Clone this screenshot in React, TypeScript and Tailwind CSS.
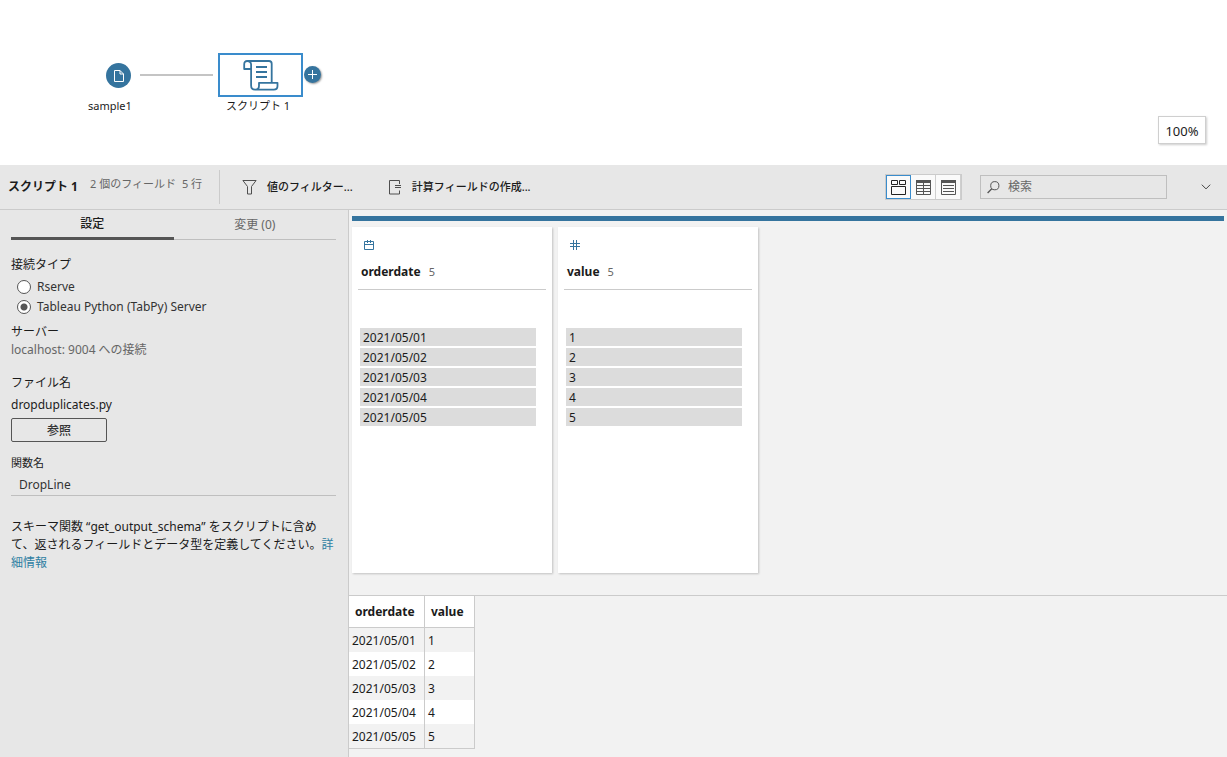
import { ReactNode } from "react";
import clsx from "clsx";

const dates = [
  "2021/05/01",
  "2021/05/02",
  "2021/05/03",
  "2021/05/04",
  "2021/05/05",
];

function FileIcon() {
  return (
    <svg width="12" height="14" viewBox="0 0 12 14" fill="none" stroke="white">
      <path d="M1.5 1.5h5.5l3.5 3.5v7.5h-9zM7 1.5v3.5h3.5" />
    </svg>
  );
}

function ScriptIcon() {
  return (
    <svg
      width="36"
      height="32"
      viewBox="0 0 36 32"
      fill="none"
      stroke="#35749e"
      strokeWidth="1.8"
      strokeLinejoin="round"
    >
      <path d="M4.5 2H26c1.600 0 2.700 1 2.700 2.700V23.500" />
      <path d="M4.200 2C2.300 2 1.200 3.400 1.200 5.200V10h6.900V5.500C8.100 3.400 6.600 2 4.200 2z" />
      <path d="M8.100 10v16.500c0 2.700 1.500 4.200 4 4.200h18.700c2.500 0 3.700-1.500 3.700-3.700v-3.200H16v3c0 2.400-1.300 3.900-3.600 3.900" />
      <path d="M13 8h11M13 13h11M13 18h11" />
    </svg>
  );
}

function FilterIcon() {
  return (
    <svg width="15" height="15" viewBox="0 0 15 15" fill="none" stroke="#4e4e4e">
      <path d="M.9.5h13.200L9.500 6.500v7.500h-4V6.500z" />
    </svg>
  );
}

function CalcIcon() {
  return (
    <svg width="13" height="15" viewBox="0 0 13 15" fill="none" stroke="#4e4e4e">
      <path d="M10.500 4V.500H.500v13.500h10V10.500M6 5.500h6M6 7.500h6" />
    </svg>
  );
}

function CalendarIcon() {
  return (
    <svg width="10" height="11" viewBox="0 0 10 11" fill="none" stroke="#35749e">
      <path d="M.500 1.500h9v8h-9zM.500 4.500h9M3.500 0v3M6.500 0v3" />
    </svg>
  );
}

function HashIcon() {
  return (
    <svg width="10" height="11" viewBox="0 0 10 11" fill="none" stroke="#35749e">
      <path d="M0 3.500h10M0 6.500h10M3.500 0v10M6.500 0v10" />
    </svg>
  );
}

function ProfileViewIcon() {
  return (
    <svg width="15" height="15" viewBox="0 0 15 15" fill="none" stroke="#222">
      <path d="M.500.500h6v4h-6zM8.500.500h6v4h-6zM.500 6.500h14v8H.500z" />
    </svg>
  );
}

function GridViewIcon() {
  return (
    <svg width="15" height="15" viewBox="0 0 15 15" fill="none" stroke="#555">
      <path d="M.500.500h14v14H.500zM.500 5.500h14M.500 8.500h14M.500 11.500h14M7.500 3v12" />
      <path d="M0 0h15v3H0z" fill="#555" stroke="none" />
    </svg>
  );
}

function ListViewIcon() {
  return (
    <svg width="15" height="15" viewBox="0 0 15 15" fill="none" stroke="#555">
      <path d="M.500.500h14v14H.500zM2 5.500h11M2 8.500h11M2 11.500h11" />
      <path d="M0 0h15v3H0z" fill="#555" stroke="none" />
    </svg>
  );
}

function SearchIcon() {
  return (
    <svg width="13" height="13" viewBox="0 0 13 13" fill="none" stroke="#555">
      <circle cx="7.800" cy="4.700" r="4.100" />
      <path d="M4.800 7.700L.600 12" strokeWidth="1.300" />
    </svg>
  );
}

function FlowPane() {
  return (
    <section className="relative h-[165px] bg-white leading-4">
      <span className="absolute left-[106px] top-[63px] flex size-[25px] items-center justify-center rounded-full bg-[#35749e]">
        <FileIcon />
      </span>
      <span className="absolute left-[88px] top-[98px] text-[11px]">
        sample1
      </span>
      <span className="absolute left-[140px] top-[74px] h-[2px] w-[73px] bg-[#c4c4c4]" />
      <button
        aria-label="スクリプト 1"
        className="absolute left-[218px] top-[53px] flex h-11 w-[85px] items-center justify-center border-2 border-[#3a8ccc] bg-white"
      >
        <ScriptIcon />
      </button>
      <span className="absolute left-[226px] top-[98px] text-[11px]">
        スクリプト 1
      </span>
      <button
        aria-label="追加"
        className="absolute left-[304px] top-[66px] flex size-[17px] items-center justify-center rounded-full bg-[#35749e] shadow-[1px_1px_2px_#0006]"
      >
        <svg width="9" height="9" viewBox="0 0 9 9" stroke="white">
          <path d="M4.500 0v9M0 4.500h9" />
        </svg>
      </button>
      <button className="absolute right-[21px] top-[116px] flex h-7 w-12 items-center justify-center border border-[#cfcfcf] bg-white pt-px text-[13px] shadow-[1px_1px_2px_#0003]">
        100%
      </button>
    </section>
  );
}

function ViewButton({
  label,
  active,
  children,
}: {
  label: string;
  active?: boolean;
  children: ReactNode;
}) {
  return (
    <button
      aria-label={label}
      className={clsx(
        "flex h-6 w-[25px] items-center justify-center bg-[#fafafa]",
        active ? "border border-[#3a8ccc]" : "border-r border-[#cfcfcf]"
      )}
    >
      {children}
    </button>
  );
}

function Toolbar() {
  return (
    <header className="flex h-[45px] items-center border-b border-[#cbcbcb] bg-[#e7e7e7] pl-2 pr-4">
      <h1 className="pb-px font-bold">スクリプト 1</h1>
      <p className="ml-3 flex gap-[6px] pb-[6px] text-[11px] text-[#666]">
        <span>2 個のフィールド</span>
        <span>5 行</span>
      </p>
      <span className="ml-[17px] h-[34px] w-px bg-[#cbcbcb]" />
      <button className="ml-[22px] flex items-center gap-[10px] text-[11px] font-medium">
        <FilterIcon />
        値のフィルター...
      </button>
      <button className="ml-9 flex items-center gap-[10px] text-[11px] font-medium">
        <CalcIcon />
        計算フィールドの作成...
      </button>
      <div className="ml-auto flex border border-[#cbcbcb]">
        <ViewButton label="プロファイル" active>
          <ProfileViewIcon />
        </ViewButton>
        <ViewButton label="グリッド">
          <GridViewIcon />
        </ViewButton>
        <ViewButton label="リスト">
          <ListViewIcon />
        </ViewButton>
      </div>
      <label className="ml-[18px] flex h-6 w-[187px] items-center gap-2 border border-[#bfbfbf] pl-[6px]">
        <SearchIcon />
        <input
          aria-label="検索"
          placeholder="検索"
          className="min-w-0 flex-1 bg-transparent outline-none placeholder:text-[#666]"
        />
      </label>
      <button aria-label="折りたたむ" className="ml-[34px]">
        <svg width="10" height="6" viewBox="0 0 10 6" fill="none" stroke="#444">
          <path d="M.800.700L5 4.900 9.200.700" />
        </svg>
      </button>
    </header>
  );
}

function ServerOption({ label, checked }: { label: string; checked?: boolean }) {
  return (
    <label className="flex h-5 items-center gap-[6px] pl-[6px] text-[#333]">
      <input
        type="radio"
        name="server"
        defaultChecked={checked}
        className="size-[14px] appearance-none rounded-full border border-[#555] bg-white checked:bg-[radial-gradient(circle,#555_3px,white_4px)]"
      />
      {label}
    </label>
  );
}

function SettingsPanel() {
  return (
    <aside className="w-[349px] shrink-0 border-r border-[#cbcbcb] bg-[#e7e7e7] pl-[11px] pr-3">
      <div role="tablist" className="flex h-[30px]">
        <button
          role="tab"
          aria-selected="true"
          className="flex-1 border-b-3 border-[#555] font-medium"
        >
          設定
        </button>
        <button
          role="tab"
          aria-selected="false"
          className="flex-1 border-b border-[#bfbfbf] text-[#666]"
        >
          変更 (0)
        </button>
      </div>
      <fieldset className="mt-4">
        <legend className="pb-[3px]">接続タイプ</legend>
        <ServerOption label="Rserve" />
        <ServerOption label="Tableau Python (TabPy) Server" checked />
      </fieldset>
      <h2 className="mt-[6px]">サーバー</h2>
      <p className="text-[#666]">localhost: 9004 への接続</p>
      <h2 className="mt-[15px]">ファイル名</h2>
      <p className="mt-1">dropduplicates.py</p>
      <button className="mt-1 flex h-6 w-24 items-center justify-center rounded-[2px] border border-[#555] pt-px font-medium text-[#333]">
        参照
      </button>
      <label htmlFor="fn" className="mt-3 block text-[11px]">
        関数名
      </label>
      <input
        id="fn"
        defaultValue="DropLine"
        className="block h-6 w-full border-b border-[#bfbfbf] bg-transparent px-2 pt-px text-[#333] outline-none"
      />
      <p className="mt-[22px]">
        スキーマ関数 “get_output_schema” をスクリプトに含めて、返されるフィールドとデータ型を定義してください。
        <a href="#" className="text-[#2f7fa3]">
          詳細情報
        </a>
      </p>
    </aside>
  );
}

function FieldCard({
  name,
  icon,
  values,
}: {
  name: string;
  icon: ReactNode;
  values: string[];
}) {
  return (
    <article className="w-[200px] bg-white px-[6px] pt-[13px] shadow-[1px_1px_2px_#0003]">
      <div className="h-[50px] border-b border-[#cbcbcb]">
        <div className="pl-[6px]">{icon}</div>
        <h3 className="mt-3 flex gap-2 pl-[3px] font-bold">
          {name}
          <span className="text-[11px] font-normal text-[#666]">
            {values.length}
          </span>
        </h3>
      </div>
      <ul className="ml-[2px] mr-[10px] mt-[38px] flex flex-col gap-[2px]">
        {values.map((value) => (
          <li key={value} className="h-[18px] bg-[#dcdcdc] pl-[3px] pt-px">
            {value}
          </li>
        ))}
      </ul>
    </article>
  );
}

function DataTable() {
  return (
    <table className="border-separate border-spacing-0">
      <thead>
        <tr className="h-8 bg-white text-left">
          <th className="w-[76px] border-b border-r border-[#cbcbcb] pl-[6px]">
            orderdate
          </th>
          <th className="w-[50px] border-b border-r border-[#cbcbcb] pl-[6px]">
            value
          </th>
        </tr>
      </thead>
      <tbody>
        {dates.map((date, i) => (
          <tr key={date} className="group h-6 last:h-[25px] even:bg-white">
            <td className="border-r border-[#cbcbcb] pl-[3px] pt-px group-last:border-b">
              {date}
            </td>
            <td className="border-r border-[#cbcbcb] pl-[3px] pt-px group-last:border-b">
              {i + 1}
            </td>
          </tr>
        ))}
      </tbody>
    </table>
  );
}

function App() {
  return (
    <div
      lang="ja"
      className="flex min-h-screen flex-col bg-[#f2f2f2] font-['Noto_Sans','Noto_Sans_CJK_JP',sans-serif] text-[12px] leading-[18px] text-[#1b1b1b]"
    >
      <FlowPane />
      <Toolbar />
      <div className="flex flex-1">
        <SettingsPanel />
        <main className="flex min-w-0 flex-1 flex-col">
          <section className="flex flex-1 flex-col px-[3px] pb-[22px] pt-[6px]">
            <div className="h-[5px] bg-[#35749e]" />
            <div className="mt-[6px] flex flex-1 gap-[6px]">
              <FieldCard
                name="orderdate"
                icon={<CalendarIcon />}
                values={dates}
              />
              <FieldCard
                name="value"
                icon={<HashIcon />}
                values={["1", "2", "3", "4", "5"]}
              />
            </div>
          </section>
          <section className="border-t border-[#cbcbcb] pb-2">
            <DataTable />
          </section>
        </main>
      </div>
    </div>
  );
}

export default App;
